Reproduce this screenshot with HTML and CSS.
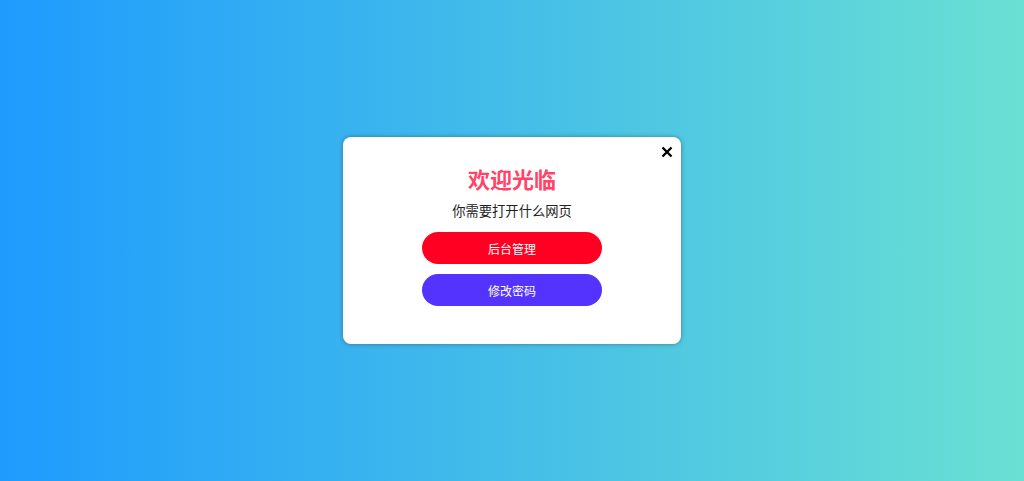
FILE: index.html
```html
<!DOCTYPE html>
<html lang="zh-CN">
<head>
<meta charset="utf-8">
<title>欢迎光临</title>
<link rel="stylesheet" href="styles.css">
</head>
<body>
<div class="modal">
  <span class="close" aria-label="关闭">
    <svg width="12" height="12" viewBox="0 0 12 12"><path d="M1.5 1.5 L10.5 10.5 M10.5 1.5 L1.5 10.5" stroke="#000" stroke-width="2.4" stroke-linecap="butt"/></svg>
  </span>
  <h1 class="title">欢迎光临</h1>
  <p class="subtitle">你需要打开什么网页</p>
  <div class="actions">
    <a class="btn btn-red" href="#">后台管理</a>
    <a class="btn btn-purple" href="#">修改密码</a>
  </div>
</div>
</body>
</html>
```
FILE: styles.css
```css
html, body {
  margin: 0;
  height: 100%;
}
body {
  background: linear-gradient(to right, #1e9bfe, #6ae0d3);
  display: flex;
  align-items: center;
  justify-content: center;
  font-family: "Noto Sans CJK SC", "Noto Sans", sans-serif;
}
.modal {
  position: relative;
  width: 338px;
  height: 207px;
  box-sizing: border-box;
  background: #fff;
  border-radius: 8px;
  box-shadow: 0 0 4px rgba(60, 60, 60, 0.55);
  padding-top: 26px;
  display: flex;
  flex-direction: column;
  align-items: center;
}
.close {
  position: absolute;
  top: 9px;
  right: 8px;
  display: flex;
}
.title {
  margin: 0;
  font-size: 22px;
  line-height: 30px;
  font-weight: 700;
  color: #ff4468;
}
.subtitle {
  margin: 8px 0 0;
  font-size: 13.3px;
  line-height: 20px;
  color: #222;
}
.actions {
  margin-top: 11px;
  display: flex;
  flex-direction: column;
  gap: 10px;
}
.btn {
  width: 180px;
  height: 32px;
  border-radius: 16px;
  display: flex;
  align-items: center;
  justify-content: center;
  color: #fff;
  font-size: 12px;
  text-decoration: none;
}
.btn-red {
  background: #ff0022;
}
.btn-purple {
  background: #5533ff;
}
```
